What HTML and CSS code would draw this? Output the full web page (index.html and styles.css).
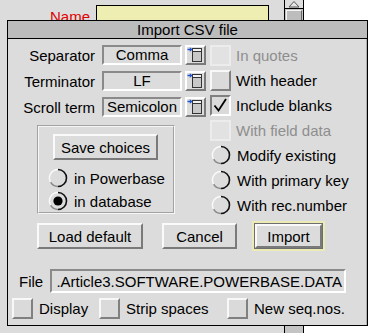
FILE: index.html
```html
<!DOCTYPE html>
<html>
  <head>
    <meta charset="UTF-8">
    <title>Import CSV file</title>
    <link rel="stylesheet" href="styles.css">
  </head>
  <body>
    <div class="desk">

      <!-- window behind the dialog -->
      <div class="backwin">
        <div class="bw-work">
          <span class="bw-label">Name</span>
          <div class="bw-field"></div>
        </div>
        <div class="bw-scroll">
          <div class="bw-arrow">
            <svg width="16" height="8" viewBox="0 0 16 8"><path d="M3 7 L8 1.5 L13 7 Z" fill="#e6e6e6" stroke="#555" stroke-width="1"/></svg>
          </div>
          <div class="bw-handle"></div>
        </div>
      </div>

      <!-- Import CSV dialog -->
      <div class="dialog">
        <div class="titlebar">Import CSV file</div>
        <div class="work">

          <div class="top">
            <div class="left-col">
              <div class="opt-row">
                <span class="lbl">Separator</span>
                <span class="field">Comma</span>
                <span class="menu-btn">
                  <svg width="17" height="16" viewBox="0 0 17 16"><rect x="5.5" y="1.5" width="9" height="13" fill="#c8c8c8" stroke="#333"/><rect x="6" y="2" width="8" height="2.5" fill="#f2f2f2"/><line x1="5.5" y1="4.5" x2="14.5" y2="4.5" stroke="#333"/><line x1="0.5" y1="2.5" x2="4" y2="2.5" stroke="#1e50d2" stroke-width="1.4"/><path d="M2.8 0.3 L5.6 2.5 L2.8 4.7 Z" fill="#1e50d2"/></svg>
                </span>
              </div>
              <div class="opt-row">
                <span class="lbl">Terminator</span>
                <span class="field">LF</span>
                <span class="menu-btn">
                  <svg width="17" height="16" viewBox="0 0 17 16"><rect x="5.5" y="1.5" width="9" height="13" fill="#c8c8c8" stroke="#333"/><rect x="6" y="2" width="8" height="2.5" fill="#f2f2f2"/><line x1="5.5" y1="4.5" x2="14.5" y2="4.5" stroke="#333"/><line x1="0.5" y1="2.5" x2="4" y2="2.5" stroke="#1e50d2" stroke-width="1.4"/><path d="M2.8 0.3 L5.6 2.5 L2.8 4.7 Z" fill="#1e50d2"/></svg>
                </span>
              </div>
              <div class="opt-row">
                <span class="lbl">Scroll term</span>
                <span class="field">Semicolon</span>
                <span class="menu-btn">
                  <svg width="17" height="16" viewBox="0 0 17 16"><rect x="5.5" y="1.5" width="9" height="13" fill="#c8c8c8" stroke="#333"/><rect x="6" y="2" width="8" height="2.5" fill="#f2f2f2"/><line x1="5.5" y1="4.5" x2="14.5" y2="4.5" stroke="#333"/><line x1="0.5" y1="2.5" x2="4" y2="2.5" stroke="#1e50d2" stroke-width="1.4"/><path d="M2.8 0.3 L5.6 2.5 L2.8 4.7 Z" fill="#1e50d2"/></svg>
                </span>
              </div>

              <div class="group">
                <span class="btn save-btn">Save choices</span>
                <div class="opt">
                  <svg class="radio" width="20" height="20" viewBox="0 0 20 20"><circle cx="10" cy="10" r="8.5" fill="#dcdcdc"/><path d="M10 1.5 A8.5 8.5 0 0 1 10 18.5" fill="none" stroke="#111" stroke-width="1.6"/><path d="M10 18.5 A8.5 8.5 0 0 1 2.6 14.2" fill="none" stroke="#888" stroke-width="1.4"/><path d="M2.6 14.2 A8.5 8.5 0 0 1 10 1.5" fill="none" stroke="#fafafa" stroke-width="1.4"/></svg>
                  in Powerbase
                </div>
                <div class="opt">
                  <svg class="radio" width="20" height="20" viewBox="0 0 20 20"><circle cx="10" cy="10" r="8.5" fill="#dcdcdc"/><path d="M10 1.5 A8.5 8.5 0 0 1 10 18.5" fill="none" stroke="#111" stroke-width="1.6"/><path d="M10 18.5 A8.5 8.5 0 0 1 2.6 14.2" fill="none" stroke="#888" stroke-width="1.4"/><path d="M2.6 14.2 A8.5 8.5 0 0 1 10 1.5" fill="none" stroke="#fafafa" stroke-width="1.4"/><circle cx="10" cy="10" r="4.6" fill="#000"/></svg>
                  in database
                </div>
              </div>
            </div>

            <div class="right-col">
              <div class="opt disabled"><span class="check off"></span>In quotes</div>
              <div class="opt"><span class="check"></span>With header</div>
              <div class="opt">
                <span class="check on">
                  <svg width="17" height="16" viewBox="0 0 17 16"><path d="M2.5 8.5 L6.5 13.5 L14 2" fill="none" stroke="#000" stroke-width="1.8"/></svg>
                </span>Include blanks
              </div>
              <div class="opt disabled"><span class="check off"></span>With field data</div>
              <div class="opt">
                <svg class="radio" width="20" height="20" viewBox="0 0 20 20"><circle cx="10" cy="10" r="8.5" fill="#dcdcdc"/><path d="M10 1.5 A8.5 8.5 0 0 1 10 18.5" fill="none" stroke="#111" stroke-width="1.6"/><path d="M10 18.5 A8.5 8.5 0 0 1 2.6 14.2" fill="none" stroke="#888" stroke-width="1.4"/><path d="M2.6 14.2 A8.5 8.5 0 0 1 10 1.5" fill="none" stroke="#fafafa" stroke-width="1.4"/></svg>
                Modify existing
              </div>
              <div class="opt">
                <svg class="radio" width="20" height="20" viewBox="0 0 20 20"><circle cx="10" cy="10" r="8.5" fill="#dcdcdc"/><path d="M10 1.5 A8.5 8.5 0 0 1 10 18.5" fill="none" stroke="#111" stroke-width="1.6"/><path d="M10 18.5 A8.5 8.5 0 0 1 2.6 14.2" fill="none" stroke="#888" stroke-width="1.4"/><path d="M2.6 14.2 A8.5 8.5 0 0 1 10 1.5" fill="none" stroke="#fafafa" stroke-width="1.4"/></svg>
                With primary key
              </div>
              <div class="opt">
                <svg class="radio" width="20" height="20" viewBox="0 0 20 20"><circle cx="10" cy="10" r="8.5" fill="#dcdcdc"/><path d="M10 1.5 A8.5 8.5 0 0 1 10 18.5" fill="none" stroke="#111" stroke-width="1.6"/><path d="M10 18.5 A8.5 8.5 0 0 1 2.6 14.2" fill="none" stroke="#888" stroke-width="1.4"/><path d="M2.6 14.2 A8.5 8.5 0 0 1 10 1.5" fill="none" stroke="#fafafa" stroke-width="1.4"/></svg>
                With rec.number
              </div>
            </div>
          </div>

          <div class="actions">
            <span class="btn load-btn">Load default</span>
            <span class="btn cancel-btn">Cancel</span>
            <span class="btn import-btn">Import</span>
          </div>

          <div class="file-row">
            <span class="file-lbl">File</span>
            <div class="file-field"><span>.Article3.SOFTWARE.POWERBASE.DATA</span></div>
          </div>

          <div class="bottom-row">
            <div class="opt"><span class="check"></span>Display</div>
            <div class="opt"><span class="check"></span>Strip spaces</div>
            <div class="opt"><span class="check"></span>New seq.nos.</div>
          </div>

        </div>
      </div>
    </div>
  </body>
</html>
```

FILE: styles.css
```css
body {
  margin: 0;
  background-color: #ffffff;
  font-family: "Liberation Sans", Arial, sans-serif;
  font-size: 15px;
  color: #000;
}
.desk {
  position: relative;
  width: 376px;
  height: 333px;
  overflow: hidden;
}

/* background window */
.backwin {
  position: absolute;
  left: 0;
  top: 0;
  width: 304px;
  height: 333px;
  display: flex;
}
.bw-work {
  flex: 1;
  background-color: #dcdcdc;
  display: flex;
  align-items: flex-start;
  padding: 5px 0 0 50px;
}
.bw-label {
  color: #e00000;
  line-height: 17px;
  margin-top: 3px;
  margin-right: 6px;
}
.bw-field {
  width: 173px;
  height: 22px;
  box-sizing: border-box;
  background-color: #eeeeb2;
  border: 1px solid #000;
}
.bw-scroll {
  width: 18px;
  background-color: #c4c4c4;
  border-left: 1px solid #000;
  border-right: 1px solid #000;
  display: flex;
  flex-direction: column;
  align-items: center;
}
.bw-arrow {
  width: 18px;
  height: 8px;
  background-color: #dedede;
  border-bottom: 1px solid #000;
  display: flex;
  justify-content: center;
}
.bw-handle {
  width: 14px;
  height: 14px;
  margin-top: 1px;
  background-color: #bdbdbd;
  border-top: 1px solid #f4f4f4;
  border-left: 1px solid #f4f4f4;
  border-right: 1px solid #666;
}

/* dialog window */
.dialog {
  position: absolute;
  left: 7px;
  top: 20px;
  width: 361px;
  height: 306px;
  box-sizing: border-box;
  border: 1px solid #000;
  background-color: #dcdcdc;
  display: flex;
  flex-direction: column;
}
.titlebar {
  height: 17px;
  line-height: 17px;
  text-align: center;
  background-color: #bcbcbc;
  border-bottom: 1px solid #000;
}
.work {
  flex: 1;
  padding-top: 6px;
  border-right: 1px solid #b0b0b0;
}
.top {
  display: flex;
  gap: 4px;
}
.left-col {
  width: 198px;
  display: flex;
  flex-direction: column;
  gap: 6px;
}
.opt-row {
  display: flex;
  align-items: center;
  height: 20px;
}
.lbl {
  width: 87px;
  text-align: right;
  margin-right: 7px;
}
.field {
  width: 80px;
  height: 20px;
  box-sizing: border-box;
  border: 2px solid #fff;
  border-top-color: #8a8a8a;
  border-left-color: #8a8a8a;
  text-align: center;
  line-height: 16px;
}
.menu-btn {
  width: 21px;
  height: 20px;
  margin-left: 3px;
  box-sizing: border-box;
  border: 2px solid #7a7a7a;
  border-top-color: #fff;
  border-left-color: #fff;
  display: flex;
}

.group {
  margin: 2px 0 0 29px;
  width: 138px;
  height: 89px;
  box-sizing: border-box;
  border: 2px groove #f6f6f6;
  padding: 7px 0 0 9px;
  display: flex;
  flex-direction: column;
  gap: 3px;
}
.save-btn {
  width: 105px;
  height: 22px;
  margin: 0 0 5px 5px;
}

.right-col {
  display: flex;
  flex-direction: column;
  gap: 5px;
}
.opt {
  display: flex;
  align-items: center;
  height: 20px;
  gap: 5px;
  white-space: nowrap;
}
.opt.disabled {
  color: #8e8e8e;
}
.radio {
  flex: none;
  margin-right: 1px;
}
.right-col .radio {
  margin-left: 1px;
}
.check {
  width: 21px;
  height: 21px;
  flex: none;
  box-sizing: border-box;
  border: 2px solid #808080;
  border-top-color: #f8f8f8;
  border-left-color: #f8f8f8;
  background-color: #dadada;
  display: flex;
}
.check.off {
  border-color: #ececec;
  background-color: #e2e2e2;
}
.check.on {
  border-color: #fff;
  border-top-color: #808080;
  border-left-color: #808080;
}

/* buttons */
.btn {
  box-sizing: border-box;
  height: 26px;
  display: flex;
  align-items: center;
  justify-content: center;
  background-color: #dcdcdc;
  border: 2px solid #7a7a7a;
  border-top-color: #fafafa;
  border-left-color: #fafafa;
}
.actions {
  display: flex;
  align-items: center;
  margin-top: 8px;
  padding-left: 29px;
}
.load-btn {
  width: 106px;
}
.cancel-btn {
  width: 75px;
  margin-left: 19px;
}
.import-btn {
  width: 67px;
  height: 24px;
  margin-left: 18px;
  box-shadow: 0 0 0 1px #6e6e6e, 0 0 0 3px #ecebb6;
}

.file-row {
  display: flex;
  align-items: center;
  margin-top: 20px;
  padding-left: 11px;
}
.file-lbl {
  width: 23px;
  margin-right: 8px;
}
.file-field {
  width: 296px;
  height: 24px;
  box-sizing: border-box;
  border: 2px solid #fff;
  border-top-color: #8a8a8a;
  border-left-color: #8a8a8a;
  overflow: hidden;
  display: flex;
  justify-content: flex-end;
  align-items: center;
  padding-right: 2px;
  white-space: nowrap;
}

.bottom-row {
  display: grid;
  grid-template-columns: 87px 128px auto;
  margin-top: 5px;
  padding-left: 4px;
}
.bottom-row .opt {
  height: 21px;
  gap: 6px;
}
```
